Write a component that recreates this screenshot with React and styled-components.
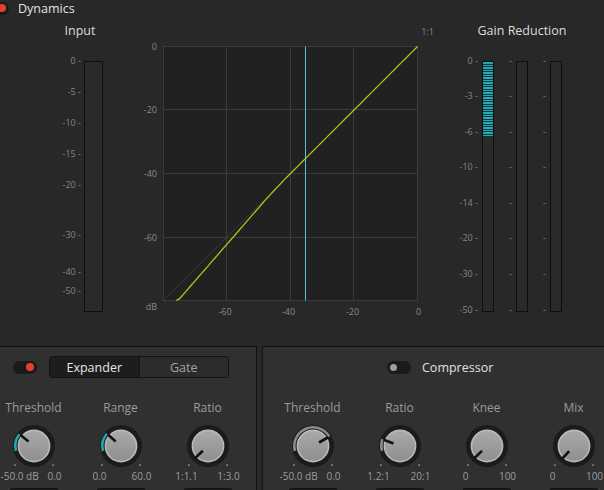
import styled, { createGlobalStyle } from "styled-components";

const GlobalStyle = createGlobalStyle`
    html, body {
        margin: 0;
        background: #282828;
        overflow: hidden;
    }
    body {
        font-family: "Open Sans", "Noto Sans", sans-serif;
    }
`

const CYAN = "#1fa9b3";
const GREY_ARC = "#8a8a8a";

const INPUT_SCALE = [
    ["0", 0], ["-5", 31], ["-10", 62], ["-15", 93],
    ["-20", 124], ["-30", 174], ["-40", 211], ["-50", 230],
];

const GAIN_SCALE = [
    ["0", 0], ["-3", 35], ["-6", 71], ["-10", 106],
    ["-14", 142], ["-20", 177], ["-30", 213], ["-50", 249],
];

const EXPANDER_KNOBS = [
    { label: "Threshold", min: "-50.0 dB", max: "0.0", angle: -51, arcFrom: -105, color: CYAN },
    { label: "Range", min: "0.0", max: "60.0", angle: -49, arcFrom: -105, color: CYAN },
    { label: "Ratio", min: "1:1.1", max: "1:3.0", angle: -133 },
];

const COMPRESSOR_KNOBS = [
    { label: "Threshold", min: "-50.0 dB", max: "0.0", angle: 60, arcFrom: -105, color: GREY_ARC },
    { label: "Ratio", min: "1.2:1", max: "20:1", angle: -69, arcFrom: -105, color: GREY_ARC },
    { label: "Knee", min: "0", max: "100", angle: -134 },
    { label: "Mix", min: "0", max: "100", angle: -137 },
];

// chart scale: 0 dB at x=417.5 / y=46.5, 3.175 px per dB
const PX_PER_DB = 3.175;

function transfer(input) {
    const T = -45, W = 10, R = 1.15;
    if (input >= T + W / 2) return input;
    if (input <= T - W / 2) return T + (input - T) * R;
    const d = input - (T + W / 2);
    return input - (R - 1) * d * d / (2 * W);
}

function curvePoints() {
    const pts = [];
    for (let i = 0; i >= -76; i -= 1) {
        const out = Math.max(transfer(i), -80);
        pts.push(`${(417.5 + i * PX_PER_DB).toFixed(1)},${(46.5 - out * PX_PER_DB).toFixed(1)}`);
        if (out <= -80) break;
    }
    return pts.join(" ");
}

const Page = styled.div`
    width: 604px;
    height: 490px;
    overflow: hidden;
    display: flex;
    flex-direction: column;
    color: #e0e0e0;
`

const Header = styled.div`
    height: 16px;
    flex-shrink: 0;
    display: flex;
    align-items: center;
    gap: 9px;
    margin-left: -15px;
    font-size: 12.5px;
    color: #e2e2e2;
`

const Toggle = styled.div`
    width: 24px;
    height: 13px;
    border-radius: 7px;
    background: #1a1a1a;
    display: flex;
    align-items: center;
    justify-content: ${props => props.$on ? "flex-end" : "flex-start"};
    padding: 0 3px;
    box-sizing: border-box;
    flex-shrink: 0;

    &::after {
        content: "";
        width: ${props => props.$on ? 8 : 7}px;
        height: ${props => props.$on ? 8 : 7}px;
        border-radius: 50%;
        background: ${props => props.$on ? "#e5402e" : "#9e9e9e"};
    }
`

const TopRow = styled.div`
    height: 330px;
    flex-shrink: 0;
    display: flex;
`

const Column = styled.div`
    width: ${props => props.$width}px;
    display: flex;
    flex-direction: column;
`

const Title = styled.div`
    margin-top: 6px;
    height: 18px;
    line-height: 18px;
    font-size: 12.5px;
    color: #dcdcdc;
    text-align: center;
    padding-left: ${props => props.$indent || 0}px;
`

const MeterRow = styled.div`
    margin-top: 21px;
    display: flex;
    padding-left: ${props => props.$indent}px;
`

const MeterUnit = styled.div`
    display: flex;
    gap: ${props => props.$gap}px;
`

const Scale = styled.div`
    position: relative;
    width: ${props => props.$width}px;
    height: 251px;
`

const Tick = styled.span`
    position: absolute;
    right: 0;
    transform: translateY(-50%);
    font-size: 9px;
    line-height: 10px;
    color: #858585;
    white-space: nowrap;
`

const Meter = styled.div`
    width: ${props => props.$width}px;
    height: 251px;
    box-sizing: border-box;
    border: 1px solid #0e0e0e;
    background: #2a2a2a;
`

const MeterFill = styled.div`
    height: ${props => props.$height}px;
    background: repeating-linear-gradient(
        to bottom,
        #1cabb5 0px,
        #1cabb5 1.6px,
        #17393c 1.6px,
        #17393c 2.5px
    );
`

const Chart = styled.svg`
    margin-top: 8px;
    display: block;
    font-family: "Open Sans", "Noto Sans", sans-serif;
`

const Bottom = styled.div`
    flex: 1;
    min-height: 0;
    display: flex;
    gap: 5px;
    margin-left: -1px;
    margin-right: -20px;
`

const Panel = styled.div`
    box-sizing: border-box;
    width: ${props => props.$width ? `${props.$width}px` : "auto"};
    flex: ${props => props.$width ? "none" : 1};
    background: #303030;
    border: 1px solid #111;
    border-bottom: none;
    padding-top: 9px;
    padding-left: ${props => props.$pad}px;
`

const PanelHead = styled.div`
    height: 22px;
    display: flex;
    align-items: center;
    gap: ${props => props.$gap}px;
    padding-left: ${props => props.$indent}px;
    font-size: 12.5px;
    color: #e0e0e0;
`

const Segmented = styled.div`
    width: 180px;
    height: 22px;
    box-sizing: border-box;
    border: 1px solid #121212;
    border-radius: 3px;
    display: flex;
    overflow: hidden;
`

const Segment = styled.div`
    flex: 1;
    display: flex;
    align-items: center;
    justify-content: center;
    font-size: 12.5px;
    background: ${props => props.$active ? "#1d1d1d" : "#2c2c2c"};
    color: ${props => props.$active ? "#e8e8e8" : "#a3a3a3"};

    & + & {
        border-left: 1px solid #121212;
    }
`

const KnobRow = styled.div`
    margin-top: 22px;
    margin-left: ${props => props.$shift || 0}px;
    display: flex;
`

const KnobCell = styled.div`
    width: 87px;
    flex-shrink: 0;
    display: flex;
    flex-direction: column;
    align-items: center;
`

const KnobLabel = styled.div`
    height: 16px;
    line-height: 16px;
    font-size: 12px;
    color: #9a9a9a;
    margin-bottom: 5px;
`

const RangeRow = styled.div`
    width: 66px;
    display: flex;
    justify-content: space-between;
`

const RangeText = styled.span`
    width: 24px;
    text-align: center;
    white-space: nowrap;
    font-size: 10px;
    line-height: 10px;
    color: #9c9c9c;
`

const ValueBox = styled.div`
    margin-top: 7px;
    width: 48px;
    height: 20px;
    box-sizing: border-box;
    background: #1c1c1c;
    border: 1px solid #121212;
    border-radius: 2px;
`

function polar(cx, cy, r, deg) {
    const a = (deg - 90) * Math.PI / 180;
    return [cx + r * Math.cos(a), cy + r * Math.sin(a)];
}

function Knob({ angle, arcFrom, color }) {
    const cx = 30, cy = 25;
    const [x1, y1] = polar(cx, cy, 7, angle);
    const [x2, y2] = polar(cx, cy, 17.5, angle);
    let arc = null;
    if (arcFrom !== undefined) {
        const [ax, ay] = polar(cx, cy, 18.7, arcFrom);
        const [bx, by] = polar(cx, cy, 18.7, angle);
        const large = angle - arcFrom > 180 ? 1 : 0;
        arc = <path d={`M${ax} ${ay} A18.7 18.7 0 ${large} 1 ${bx} ${by}`} fill="none" stroke={color} strokeWidth="2.6" />;
    }
    const [lx, ly] = polar(cx, cy, 27, -135);
    const [rx, ry] = polar(cx, cy, 27, 135);
    return (
        <svg width="60" height="50" viewBox="0 0 60 50">
            <defs>
                <linearGradient id="knobFace" x1="0" y1="0" x2="0" y2="1">
                    <stop offset="0" stopColor="#a9a9a9" />
                    <stop offset="1" stopColor="#8f8f8f" />
                </linearGradient>
            </defs>
            <circle cx={cx} cy={cy} r="21" fill="#1b1b1b" />
            {arc}
            <circle cx={cx} cy={cy} r="15.6" fill="url(#knobFace)" stroke="#bababa" strokeWidth="1.6" />
            <line x1={x1} y1={y1} x2={x2} y2={y2} stroke="#111" strokeWidth="2.6" />
            <circle cx={lx} cy={ly} r="0.9" fill="#9a9a9a" />
            <circle cx={rx} cy={ry} r="0.9" fill="#9a9a9a" />
        </svg>
    );
}

function KnobControl({ knob }) {
    return (
        <KnobCell>
            <KnobLabel>{knob.label}</KnobLabel>
            <Knob angle={knob.angle} arcFrom={knob.arcFrom} color={knob.color} />
            <RangeRow>
                <RangeText>{knob.min}</RangeText>
                <RangeText>{knob.max}</RangeText>
            </RangeRow>
            <ValueBox />
        </KnobCell>
    );
}

function TransferChart() {
    const grid = "#3b3b3b";
    const label = { fontSize: 9, fill: "#8a8a8a" };
    return (
        <Chart width="300" height="296" viewBox="140 24 300 296">
            <rect x="163.5" y="46.5" width="254" height="254" fill="#212121" stroke={grid} />
            {[226.5, 290.5, 353.5].map(x => (
                <line key={x} x1={x} y1="46.5" x2={x} y2="300.5" stroke={grid} />
            ))}
            {[109.5, 173.5, 237.5].map(y => (
                <line key={y} x1="163.5" y1={y} x2="417.5" y2={y} stroke={grid} />
            ))}
            <line x1="164" y1="300" x2="417.5" y2="46.5" stroke="#353535" />
            <polyline points={curvePoints()} fill="none" stroke="#b3c216" strokeWidth="1.3" />
            <line x1="305.5" y1="46.5" x2="305.5" y2="300.5" stroke="#5dc1cb" />
            {[["0", 46.5], ["-20", 109.5], ["-40", 173.5], ["-60", 237.5], ["dB", 306.5]].map(([t, y]) => (
                <text key={t} x="157" y={y + 3} textAnchor="end" {...label}>{t}</text>
            ))}
            {[["-60", 225], ["-40", 288.5], ["-20", 352.5], ["0", 418.5]].map(([t, x]) => (
                <text key={t} x={x} y="315" textAnchor="middle" {...label}>{t}</text>
            ))}
            <text x="427.5" y="35" textAnchor="middle" {...label}>1:1</text>
        </Chart>
    );
}

function ScaleColumn({ width, marks, bare }) {
    return (
        <Scale $width={width}>
            {marks.map(([t, pos]) => (
                <Tick key={t} style={{ top: pos }}>{bare ? "-" : `${t} -`}</Tick>
            ))}
        </Scale>
    );
}

export default function App() {
    return (
        <Page>
            <GlobalStyle />
            <Header>
                <Toggle $on />
                <span>Dynamics</span>
            </Header>

            <TopRow>
                <Column $width={140}>
                    <Title $indent={20}>Input</Title>
                    <MeterRow $indent={41}>
                        <MeterUnit $gap={3}>
                            <ScaleColumn width={40} marks={INPUT_SCALE} />
                            <Meter $width={19} />
                        </MeterUnit>
                    </MeterRow>
                </Column>

                <Column $width={300}>
                    <TransferChart />
                </Column>

                <Column $width={164}>
                    <Title>Gain Reduction</Title>
                    <MeterRow $indent={2}>
                        <MeterUnit $gap={4}>
                            <ScaleColumn width={36} marks={GAIN_SCALE} />
                            <Meter $width={12}>
                                <MeterFill $height={75} />
                            </Meter>
                        </MeterUnit>
                        {[1, 2].map(i => (
                            <MeterUnit key={i} $gap={4}>
                                <ScaleColumn width={18} marks={GAIN_SCALE} bare />
                                <Meter $width={12} />
                            </MeterUnit>
                        ))}
                    </MeterRow>
                </Column>
            </TopRow>

            <Bottom>
                <Panel $width={258} $pad={0}>
                    <PanelHead $gap={12} $indent={13}>
                        <Toggle $on />
                        <Segmented>
                            <Segment $active>Expander</Segment>
                            <Segment>Gate</Segment>
                        </Segmented>
                    </PanelHead>
                    <KnobRow $shift={-10}>
                        {EXPANDER_KNOBS.map(k => <KnobControl key={k.label} knob={k} />)}
                    </KnobRow>
                </Panel>

                <Panel $pad={6}>
                    <PanelHead $gap={11} $indent={118}>
                        <Toggle />
                        <span>Compressor</span>
                    </PanelHead>
                    <KnobRow>
                        {COMPRESSOR_KNOBS.map(k => <KnobControl key={k.label} knob={k} />)}
                    </KnobRow>
                </Panel>
            </Bottom>
        </Page>
    );
}
